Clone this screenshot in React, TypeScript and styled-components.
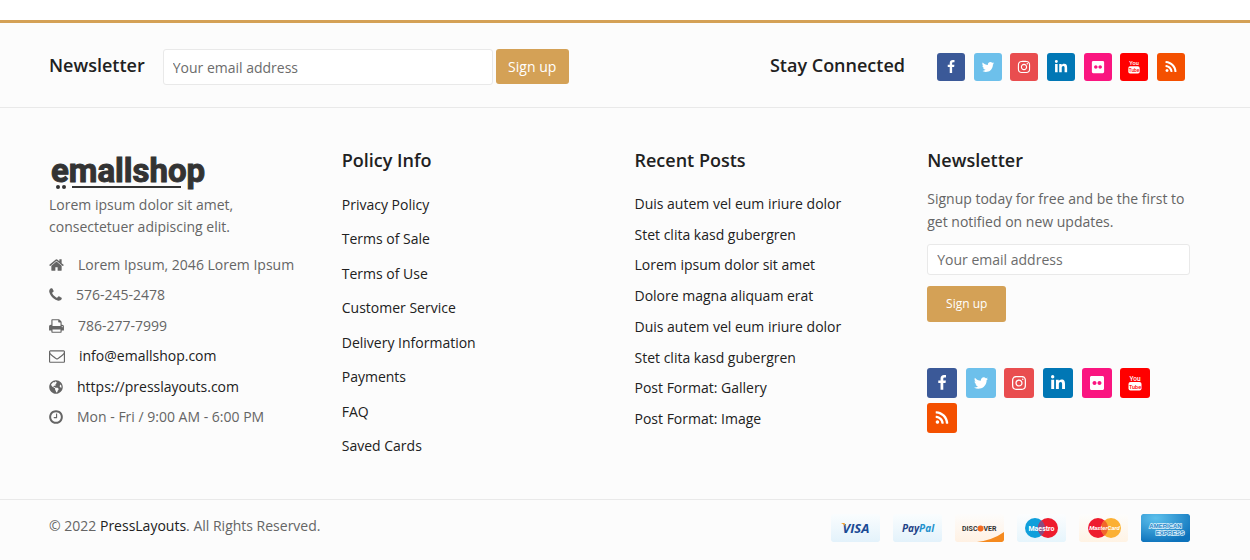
import React from 'react';
import styled, { createGlobalStyle } from 'styled-components';
import { FaInstagram, FaLinkedinIn, FaFlickr, FaGlobeAmericas } from 'react-icons/fa';

const GlobalStyle = createGlobalStyle`
  *, *::before, *::after { box-sizing: border-box; }
  html { background: #fcfcfc; }
  body {
    margin: 0;
    color: #656565;
    font: 400 14px/24px "Open Sans", "Noto Sans", sans-serif;
  }
  h2, p, ul { margin: 0; padding: 0; }
  ul { list-style: none; }
  a { color: #212121; text-decoration: none; }
`;

const PageEnd = styled.div`
  height: 20px;
  background: #fff;
`;

const Footer = styled.footer`
  border-top: 3px solid #d4a156;
  background: #fcfcfc;
`;

const TopBar = styled.section`
  display: flex;
  flex-wrap: wrap;
  align-items: center;
  justify-content: space-between;
  gap: 16px;
  min-height: 85px;
  padding: 4px 65px 0 49px;
  border-bottom: 1px solid #e9e9e9;
`;

const InlineForm = styled.form`
  display: flex;
  align-items: flex-start;
  gap: 3px;
`;

const Title = styled.h2`
  color: #212121;
  font-size: 18px;
  font-weight: 600;
  line-height: 24px;
`;

const FormTitle = styled(Title)`
  margin-right: 15px;
  line-height: 32px;
`;

const ConnectedTitle = styled(Title)`
  padding-bottom: 4px;
`;

const EmailInput = styled.input<{ $size: 'wide' | 'fill' }>`
  width: ${(p) => (p.$size === 'wide' ? '330px' : '100%')};
  height: ${(p) => (p.$size === 'wide' ? '36px' : '31px')};
  padding: 0 9px;
  border: 1px solid #e9e9e9;
  border-radius: 3px;
  background: #fff;
  color: #656565;
  font: inherit;
  &::placeholder { color: #6c6c6c; opacity: 1; }
`;

const SignUpButton = styled.button<{ $small?: boolean }>`
  height: ${(p) => (p.$small ? '36px' : '35px')};
  width: ${(p) => (p.$small ? '79px' : '73px')};
  padding: 0;
  border: 0;
  border-radius: 3px;
  background: #d4a156;
  color: #fff;
  font: inherit;
  font-size: ${(p) => (p.$small ? '12px' : '14px')};
  cursor: pointer;
`;

const Connected = styled.div`
  display: flex;
  align-items: center;
  gap: 32px;
`;

const SocialList = styled.ul<{ $large?: boolean }>`
  display: grid;
  grid-template-columns: ${(p) => (p.$large ? 'repeat(6, 30px)' : 'repeat(7, 28px)')};
  justify-content: space-between;
  row-gap: 5px;
  width: ${(p) => (p.$large ? '223px' : '248px')};
`;

const SocialLink = styled.a<{ $color: string; $large?: boolean }>`
  display: flex;
  align-items: center;
  justify-content: center;
  height: ${(p) => (p.$large ? '30px' : '28px')};
  border-radius: 3px;
  background: ${(p) => p.$color};
  color: #fff;
  svg {
    display: block;
    width: ${(p) => (p.$large ? '16px' : '14px')};
    height: ${(p) => (p.$large ? '16px' : '14px')};
  }
`;

const Columns = styled.section`
  display: grid;
  grid-template-columns: repeat(4, minmax(0, 1fr));
  gap: 30px;
  padding: 40px 60px 41px 49px;
  border-bottom: 1px solid #e9e9e9;
`;

const Column = styled.div`
  min-width: 0;
`;

const LogoLink = styled.a`
  display: block;
  height: 46px;
  svg { display: block; }
`;

const About = styled.p`
  max-width: 200px;
  line-height: 22px;
`;

const ContactList = styled.ul`
  display: flex;
  flex-direction: column;
  justify-content: space-between;
  min-height: 176px;
  margin-top: 15px;
`;

const ContactRow = styled.li`
  display: flex;
  align-items: center;
  gap: 14px;
  white-space: nowrap;
  svg { display: block; flex: none; }
`;

const LinkList = styled.ul<{ $height: number; $gap: number }>`
  display: flex;
  flex-direction: column;
  justify-content: space-between;
  min-height: ${(p) => p.$height}px;
  margin-top: ${(p) => p.$gap}px;
`;

const SignupText = styled.p`
  margin: 15px 0 11px;
  line-height: 23px;
`;

const StackedForm = styled.form`
  display: flex;
  flex-direction: column;
  align-items: flex-start;
  gap: 11px;
  margin-bottom: 46px;
`;

const BottomBar = styled.section`
  display: flex;
  align-items: flex-start;
  justify-content: space-between;
  padding: 14px 60px 18px 49px;
`;

const Payments = styled.ul`
  display: flex;
  gap: 13px;
  svg { display: block; border-radius: 2px; }
`;

const FacebookIcon = () => (
  <svg viewBox="0 0 1792 1792" fill="currentColor" aria-hidden="true">
    <path d="M1343 12v264h-157q-86 0-116 36t-30 108v189h293l-39 296h-254v759h-306v-759h-255v-296h255v-218q0-186 104-288.5t277-102.5q147 0 228 12z" />
  </svg>
);

const TwitterIcon = () => (
  <svg viewBox="0 0 1792 1792" fill="currentColor" aria-hidden="true">
    <path d="M1684 408q-67 98-162 167 1 14 1 42 0 130-38 259.5t-115.5 248.5-184.5 210.5-258 146-323 54.5q-271 0-496-145 35 4 78 4 225 0 401-138-105-2-188-64.5t-114-159.5q33 5 61 5 43 0 85-11-112-23-185.5-111.5t-73.5-205.5v-4q68 38 146 41-66-44-105-115t-39-154q0-88 44-163 121 149 294.5 238.5t371.5 99.5q-8-38-8-74 0-134 94.5-228.5t228.5-94.5q140 0 236 102 109-21 205-78-37 115-142 178 93-10 186-50z" />
  </svg>
);

const RssIcon = () => (
  <svg viewBox="0 0 1792 1792" fill="currentColor" aria-hidden="true">
    <path d="M576 1344q0 80-56 136t-136 56-136-56-56-136 56-136 136-56 136 56 56 136zm512 123q2 28-17 48-18 21-47 21h-135q-25 0-43-16.5t-20-41.5q-22-229-184.5-391.5t-391.500-184.5q-25-2-41.5-20t-16.5-43v-135q0-29 21-47 17-17 43-17h5q160 13 306 80.5t259 181.5q114 113 181.5 259t80.5 306zm512 2q2 27-18 47-18 20-46 20h-143q-26 0-44.5-17.5t-19.5-42.5q-12-215-101-408.5t-231.5-336-336-231.5-408.5-102q-25-1-42.5-19.5t-17.5-43.5v-143q0-28 20-46 18-18 44-18h3q262 13 501.5 120t425.5 294q187 186 294 425.5t120 501.5z" />
  </svg>
);

const YouTubeIcon = () => (
  <svg viewBox="0 0 16 16" aria-hidden="true" fontFamily="Roboto, Liberation Sans, sans-serif" fontWeight="500" textAnchor="middle">
    <text x="8" y="6" fontSize="6.500" fill="#fff">You</text>
    <rect x="1.500" y="7" width="13" height="8.500" rx="2" fill="#fff" />
    <text x="8" y="13.500" fontSize="5.500" fill="#f00">Tube</text>
  </svg>
);

const networks = [
  { name: 'Facebook', color: '#3b5998', icon: <FacebookIcon /> },
  { name: 'Twitter', color: '#6dc0eb', icon: <TwitterIcon /> },
  { name: 'Instagram', color: '#e94d4f', icon: <FaInstagram /> },
  { name: 'LinkedIn', color: '#0177b5', icon: <FaLinkedinIn /> },
  { name: 'Flickr', color: '#fa1580', icon: <FaFlickr /> },
  { name: 'YouTube', color: '#ff0000', icon: <YouTubeIcon /> },
  { name: 'RSS', color: '#f45000', icon: <RssIcon /> },
];

const Social = ({ large }: { large?: boolean }) => (
  <SocialList $large={large}>
    {networks.map((n) => (
      <li key={n.name}>
        <SocialLink href="#" aria-label={n.name} $color={n.color} $large={large}>{n.icon}</SocialLink>
      </li>
    ))}
  </SocialList>
);

const Logo = () => (
  <svg width="160" height="46" viewBox="0 0 160 46" fill="#333" aria-hidden="true">
    <text x="2" y="34" fontFamily="Roboto, sans-serif" fontWeight="700" fontSize="33" stroke="#333" strokeWidth="1">emallshop</text>
    <circle cx="9" cy="39" r="2" />
    <circle cx="15" cy="39" r="2" />
    <rect x="23" y="38" width="109" height="2" />
  </svg>
);

const Glyph = ({ x, w, width, d }: { x: number; w: number; width: number; d: string }) => (
  <svg width={width} height="16" viewBox={`${x} 0 ${w} 1792`} fill="currentColor" aria-hidden="true"><path d={d} /></svg>
);

const contacts = [
  {
    icon: <Glyph x={64} w={1664} width={15} d="M1472 992v480q0 26-19 45t-45 19h-384v-384h-256v384h-384q-26 0-45-19t-19-45v-480q0-1 .5-3t.5-3l575-474 575 474q1 2 1 6zm223-69l-62 74q-8 9-21 11h-3q-13 0-21-7l-692-577-692 577q-12 8-24 7-13-2-21-11l-62-74q-8-10-7-23.5t11-21.5l719-599q32-26 76-26t76 26l244 204v-195q0-14 9-23t23-9h192q14 0 23 9t9 23v408l219 182q10 8 11 21.5t-7 23.5z" />,
    text: 'Lorem Ipsum, 2046 Lorem Ipsum',
  },
  {
    icon: <Glyph x={192} w={1408} width={13} d="M1600 1240q0 27-10 70.5t-21 68.5q-21 50-122 106-94 51-186 51-27 0-53-3.5t-57.5-12.5-47-14.5-55.5-20.5-49-18q-98-35-175-83-127-79-264-216t-216-264q-48-77-83-175-3-9-18-49t-20.5-55.5-14.5-47-12.5-57.5-3.5-53q0-92 51-186 56-101 106-122 25-11 68.5-21t70.5-10q14 0 21 3 18 6 53 76 11 19 30 54t35 63.5 31 53.5q3 4 17.5 25t21.5 35.5 7 28.5q0 20-28.5 50t-62 55-62 53-28.5 46q0 9 5 22.5t8.5 20.5 14 24 11.5 19q76 137 174 235t235 174q2 1 19 11.5t24 14 20.5 8.5 22.5 5q18 0 46-28.5t53-62 55-62 50-28.5q14 0 28.5 7t35.5 21.5 25 17.5q25 15 53.5 31t63.5 35 54 30q70 35 76 53 3 7 3 21z" />,
    text: '576-245-2478',
  },
  {
    icon: <Glyph x={64} w={1664} width={15} d="M448 1536h896v-256h-896v256zm0-640h896v-384h-160q-40 0-68-28t-28-68v-160h-640v640zm1152 64q0-26-19-45t-45-19-45 19-19 45 19 45 45 19 45-19 19-45zm128 0v416q0 13-9.5 22.5t-22.5 9.5h-224v160q0 40-28 68t-68 28h-960q-40 0-68-28t-28-68v-160h-224q-13 0-22.5-9.5t-9.5-22.5v-416q0-79 56.5-135.5t135.5-56.5h64v-544q0-40 28-68t68-28h672q40 0 88 20t76 48l152 152q28 28 48 76t20 88v256h64q79 0 135.5 56.5t56.5 135.5z" />,
    text: '786-277-7999',
  },
  {
    icon: <Glyph x={0} w={1792} width={16} d="M1664 1504v-768q-32 36-69 66-268 206-426 338-51 43-83 67t-86.5 48.5-102.5 24.5h-2q-48 0-102.5-24.5t-86.5-48.5-83-67q-158-132-426-338-37-30-69-66v768q0 13 9.5 22.5t22.5 9.5h1472q13 0 22.5-9.5t9.5-22.5zm0-1051v-24.5l-.5-13-3-12.5-5.5-9-9-7.5-14-2.5h-1472q-13 0-22.5 9.5t-9.5 22.5q0 168 147 284 193 152 401 317 6 5 35 29.5t46 37.5 44.5 31.5 50.5 27.5 43 9h2q20 0 43-9t50.5-27.5 44.5-31.5 46-37.5 35-29.5q208-165 401-317 54-43 100.5-115.5t46.5-131.5zm128-37v1088q0 66-47 113t-113 47h-1472q-66 0-113-47t-47-113v-1088q0-66 47-113t113-47h1472q66 0 113 47t47 113z" />,
    text: 'info@emallshop.com',
    href: 'mailto:info@emallshop.com',
  },
  { icon: <FaGlobeAmericas size={14} aria-hidden="true" />, text: 'https://presslayouts.com', href: 'https://presslayouts.com' },
  {
    icon: <Glyph x={128} w={1536} width={14} d="M1024 544v448q0 14-9 23t-23 9h-320q-14 0-23-9t-9-23v-64q0-14 9-23t23-9h224v-352q0-14 9-23t23-9h64q14 0 23 9t9 23zm416 352q0-148-73-273t-198-198-273-73-273 73-198 198-73 273 73 273 198 198 273 73 273-73 198-198 73-273zm224 0q0 209-103 385.5t-279.5 279.5-385.5 103-385.5-103-279.5-279.5-103-385.5 103-385.5 279.5-279.5 385.5-103 385.5 103 279.5 279.5 103 385.5z" />,
    text: 'Mon - Fri / 9:00 AM - 6:00 PM',
  },
];

const policies = ['Privacy Policy', 'Terms of Sale', 'Terms of Use', 'Customer Service', 'Delivery Information', 'Payments', 'FAQ', 'Saved Cards'];

const posts = [
  'Duis autem vel eum iriure dolor',
  'Stet clita kasd gubergren',
  'Lorem ipsum dolor sit amet',
  'Dolore magna aliquam erat',
  'Duis autem vel eum iriure dolor',
  'Stet clita kasd gubergren',
  'Post Format: Gallery',
  'Post Format: Image',
];

const Card = ({ id, from, to, label, children }: { id: string; from: string; to: string; label: string; children: React.ReactNode }) => (
  <li>
    <svg width="49" height="28" viewBox="0 0 49 28" role="img" aria-label={label} fontFamily="Open Sans, sans-serif" fontWeight="700" textAnchor="middle">
      <defs>
        <linearGradient id={id} x1="0" y1="0" x2="0" y2="1">
          <stop offset="0" stopColor={from} />
          <stop offset="1" stopColor={to} />
        </linearGradient>
      </defs>
      <rect width="49" height="28" rx="2" fill={`url(#${id})`} />
      {children}
    </svg>
  </li>
);

const PaymentCards = () => (
  <Payments>
    <Card id="visa" from="#fafdfe" to="#e3f2fb" label="Visa">
      <text x="25" y="19" fontSize="13" fontStyle="italic" fill="#1a4a94">VISA</text>
      <path d="M10 9h3.500l1.500 4q-1.500-2.500-5-4z" fill="#f0a02c" />
    </Card>
    <Card id="paypal" from="#fafdfe" to="#e3f2fb" label="PayPal">
      <text x="25" y="18" fontSize="10" fontStyle="italic" fill="#1f4287">Pay<tspan fill="#2391cd">Pal</tspan></text>
    </Card>
    <Card id="discover" from="#fdfcfb" to="#fff1e3" label="Discover">
      <path d="M22 28Q38 26 49 18v8q0 2-2 2z" fill="#f58a1f" />
      <circle cx="25.500" cy="14.500" r="3" fill="#f26a21" />
      <g fontSize="7" fill="#333" fontFamily="Roboto, Liberation Sans, sans-serif">
        <text x="22.500" y="17" textAnchor="end">DISC</text>
        <text x="28.500" y="17" textAnchor="start">VER</text>
      </g>
    </Card>
    <Card id="maestro" from="#fcfdfe" to="#e6f5fc" label="Maestro">
      <circle cx="18" cy="14" r="10" fill="#109fdb" />
      <circle cx="31" cy="14" r="10" fill="#ee1c2e" />
      <path d="M24.500 6.400a10 10 0 0 1 0 15.200a10 10 0 0 1 0-15.200z" fill="#8c4b80" />
      <text x="24.500" y="16.500" fontSize="7" fill="#fff" fontFamily="Roboto, sans-serif">Maestro</text>
    </Card>
    <Card id="mastercard" from="#fdfdfc" to="#fff3e4" label="MasterCard">
      <circle cx="19" cy="14" r="10" fill="#ee1c2e" />
      <circle cx="32" cy="14" r="10" fill="#fbb034" />
      <path d="M25.500 6.400a10 10 0 0 1 0 15.200a10 10 0 0 1 0-15.200z" fill="#f1662b" />
      <text x="25.500" y="16" fontSize="6" fontStyle="italic" fill="#fff" fontFamily="Roboto, sans-serif">MasterCard</text>
    </Card>
    <li>
      <svg width="49" height="28" viewBox="0 0 49 28" role="img" aria-label="American Express" fontFamily="Liberation Sans, sans-serif" fontWeight="700" textAnchor="middle">
        <defs>
          <radialGradient id="amex" cx=".3" cy=".15" r=".9">
            <stop offset="0" stopColor="#5cc0ec" />
            <stop offset="1" stopColor="#0d72bb" />
          </radialGradient>
        </defs>
        <rect width="49" height="28" rx="2" fill="url(#amex)" />
        <g fontSize="6" fill="#1f84c8" stroke="#d9effa" strokeWidth="1.500" paintOrder="stroke">
          <text x="24.500" y="14">AMERICAN</text>
          <text x="29" y="21">EXPRESS</text>
        </g>
      </svg>
    </li>
  </Payments>
);

export default function App() {
  const stop = (e: React.FormEvent) => e.preventDefault();
  return (
    <>
      <GlobalStyle />
      <PageEnd />
      <Footer>
        <TopBar>
          <InlineForm onSubmit={stop}>
            <FormTitle>Newsletter</FormTitle>
            <EmailInput $size="wide" type="email" placeholder="Your email address" aria-label="Your email address" />
            <SignUpButton type="submit">Sign up</SignUpButton>
          </InlineForm>
          <Connected>
            <ConnectedTitle>Stay Connected</ConnectedTitle>
            <Social />
          </Connected>
        </TopBar>
        <Columns>
          <Column>
            <LogoLink href="#" aria-label="emallshop"><Logo /></LogoLink>
            <About>Lorem ipsum dolor sit amet, consectetuer adipiscing elit.</About>
            <ContactList>
              {contacts.map((c) => (
                <ContactRow key={c.text}>
                  {c.icon}
                  {c.href ? <a href={c.href}>{c.text}</a> : <span>{c.text}</span>}
                </ContactRow>
              ))}
            </ContactList>
          </Column>
          <Column>
            <Title>Policy Info</Title>
            <LinkList $height={265} $gap={21}>
              {policies.map((t) => <li key={t}><a href="#">{t}</a></li>)}
            </LinkList>
          </Column>
          <Column>
            <Title>Recent Posts</Title>
            <LinkList $height={239} $gap={20}>
              {posts.map((t, i) => <li key={i}><a href="#">{t}</a></li>)}
            </LinkList>
          </Column>
          <Column>
            <Title>Newsletter</Title>
            <SignupText>Signup today for free and be the first to get notified on new updates.</SignupText>
            <StackedForm onSubmit={stop}>
              <EmailInput $size="fill" type="email" placeholder="Your email address" aria-label="Your email address" />
              <SignUpButton $small type="submit">Sign up</SignUpButton>
            </StackedForm>
            <Social large />
          </Column>
        </Columns>
        <BottomBar>
          <p>© 2022 <a href="#">PressLayouts</a>. All Rights Reserved.</p>
          <PaymentCards />
        </BottomBar>
      </Footer>
    </>
  );
}
